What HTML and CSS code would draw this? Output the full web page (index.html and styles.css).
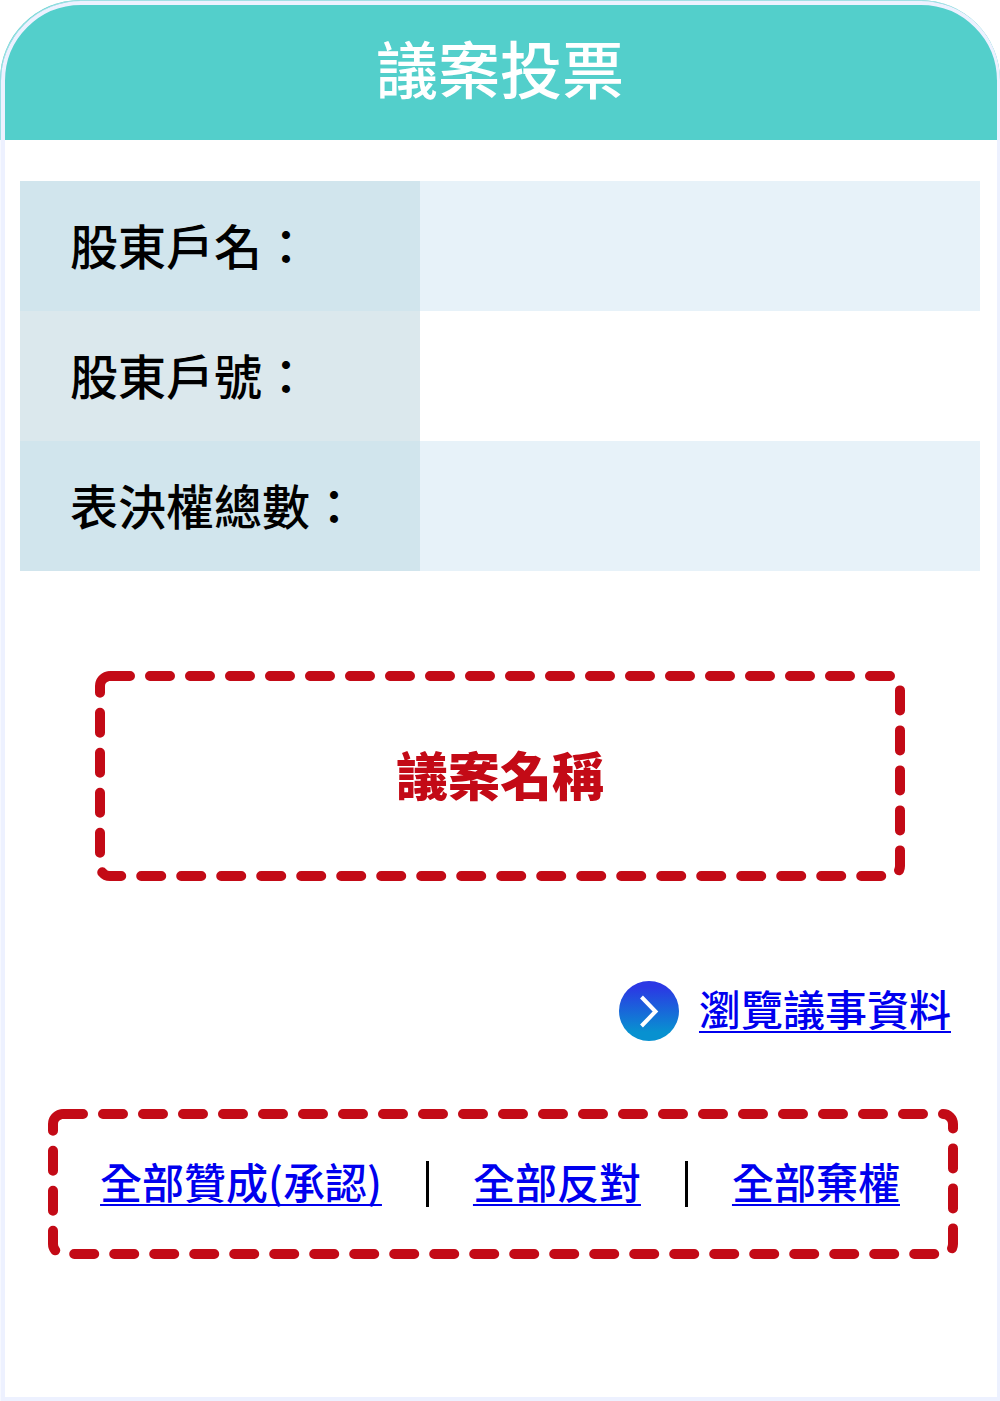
FILE: index.html
```html
<!DOCTYPE html>
<html lang="zh-Hant">
<head>
<meta charset="utf-8">
<meta name="viewport" content="width=device-width, initial-scale=1">
<title>議案投票</title>
<link rel="stylesheet" href="styles.css">
</head>
<body>
<main class="card">
  <header class="card-header">
    <h1 class="card-title">議案投票</h1>
  </header>

  <table class="info">
    <tbody>
      <tr><th scope="row">股東戶名：</th><td></td></tr>
      <tr><th scope="row">股東戶號：</th><td></td></tr>
      <tr><th scope="row">表決權總數：</th><td></td></tr>
    </tbody>
  </table>

  <section class="dashed proposal">
    <svg class="dashes" aria-hidden="true"><rect width="100%" height="100%" rx="10"/></svg>
    <h2 class="proposal-name">議案名稱</h2>
  </section>

  <div class="browse">
    <svg class="browse-icon" viewBox="0 0 60 60" aria-hidden="true">
      <defs>
        <linearGradient id="disc" x1="0" y1="0" x2="0" y2="1">
          <stop offset="0.1" stop-color="#2b38e4"/>
          <stop offset="0.85" stop-color="#0891d0"/>
        </linearGradient>
      </defs>
      <circle cx="30" cy="30" r="30" fill="url(#disc)"/>
      <path d="M22.5 16 L36.5 30.5 L22.5 45" fill="none" stroke="#fff" stroke-width="4"/>
    </svg>
    <a href="#materials">瀏覽議事資料</a>
  </div>

  <nav class="dashed choices">
    <svg class="dashes" aria-hidden="true"><rect width="100%" height="100%" rx="10"/></svg>
    <a href="#approve">全部贊成(承認)</a>
    <span class="divider"></span>
    <a href="#oppose">全部反對</a>
    <span class="divider"></span>
    <a href="#abstain">全部棄權</a>
  </nav>
</main>
</body>
</html>
```

FILE: styles.css
```css
* {
  box-sizing: border-box;
}

body {
  margin: 0;
  background: #fff;
  color: #000;
  font-family: "Noto Sans CJK TC", sans-serif;
  font-weight: 500;
}

.card {
  position: relative;
  padding-bottom: 142px;
  overflow: hidden;
  border-radius: 80px 80px 0 0;
}

/* pale outline drawn over the header */
.card::after {
  content: "";
  position: absolute;
  inset: 1px -1px 0 1px;
  border: 4px solid #edf1ff;
  border-radius: 80px 80px 0 0;
  box-shadow: 0 0 0 1px rgba(237, 241, 255, 0.5);
  pointer-events: none;
}

.card-header {
  display: flex;
  align-items: center;
  justify-content: center;
  height: 140px;
  padding-bottom: 6px;
  background: #53cfcb;
}

.card-title {
  margin: 0;
  color: #fff;
  font-size: 62px;
  font-weight: 500;
  line-height: 80px;
}

.info {
  width: calc(100% - 40px);
  margin: 41px 20px 100px;
  border-collapse: collapse;
  table-layout: fixed;
}

.info tr {
  height: 130px;
}

.info tr:nth-child(odd) {
  background: #e7f2f9;
}

.info th {
  width: 400px;
  padding: 0 0 4px 50px;
  background: #dbe8ed;
  font-size: 48px;
  font-weight: 500;
  line-height: 64px;
  text-align: left;
}

.info tr:nth-child(odd) th {
  background: #d1e5ed;
}

.dashed {
  position: relative;
  display: flex;
  align-items: center;
  justify-content: center;
}

.dashes {
  position: absolute;
  top: 5px;
  left: 5px;
  width: calc(100% - 10px);
  height: calc(100% - 10px);
  overflow: visible;
  fill: none;
  stroke: #c30a16;
  stroke-width: 10px;
  stroke-linecap: round;
  stroke-dasharray: 20 20;
  pointer-events: none;
}

.proposal {
  min-height: 210px;
  margin: 0 95px 100px;
  padding-bottom: 4px;
}

.proposal-name {
  margin: 0;
  color: #c30a16;
  font-size: 52px;
  font-weight: 900;
  line-height: 64px;
}

.browse {
  display: flex;
  align-items: center;
  justify-content: flex-end;
  gap: 20px;
  padding-right: 49px;
  margin-bottom: 68px;
}

.browse-icon {
  width: 60px;
  height: 60px;
}

a {
  padding-bottom: 6px;
  color: #00e;
  font-size: 42px;
  line-height: 54px;
  text-decoration-thickness: 2px;
  text-decoration-skip-ink: none;
  text-underline-offset: 5px;
}

.choices {
  min-height: 150px;
  gap: 44px;
  margin: 0 42px 0 48px;
  padding-right: 6px;
}

.divider {
  width: 3px;
  height: 46px;
  background: #000;
}
```
